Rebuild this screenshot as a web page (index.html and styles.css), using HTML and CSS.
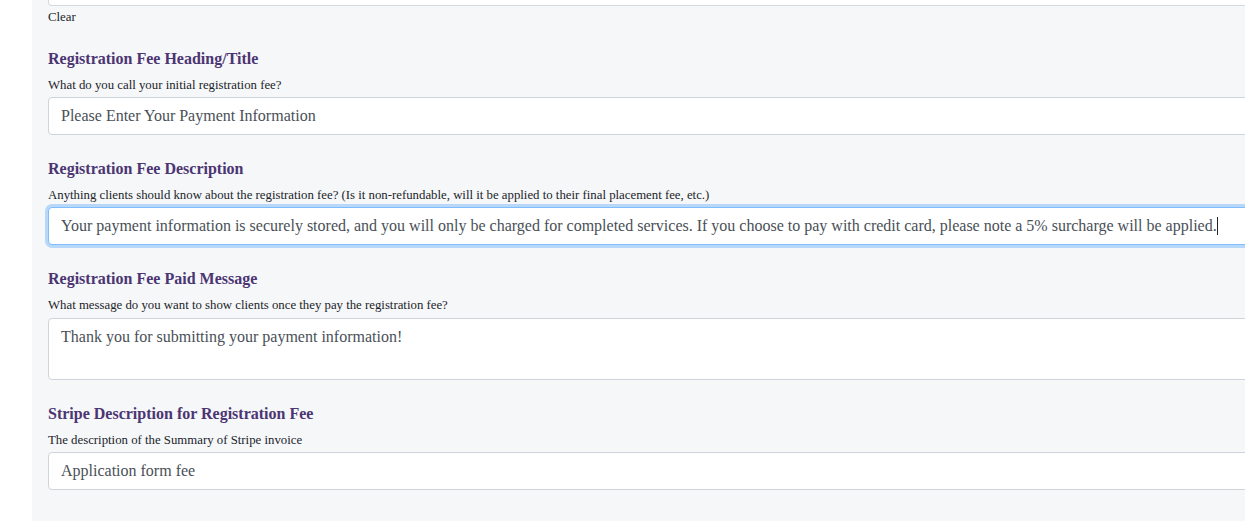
FILE: index.html
```html
<!DOCTYPE html>
<html lang="en">
<head>
    <meta charset="UTF-8">
    <meta name="viewport" content="width=device-width, initial-scale=1.0">
    <title>Registration Fee Settings</title>
    <link rel="stylesheet" href="styles.css">
</head>
<body>
    <div class="page">
        <div class="panel">
            <div class="prev-field"></div>
            <a class="clear-link">Clear</a>

            <div class="form-group">
                <h3 class="field-title">Registration Fee Heading/Title</h3>
                <p class="field-help">What do you call your initial registration fee?</p>
                <input class="form-control" type="text" value="Please Enter Your Payment Information">
            </div>

            <div class="form-group">
                <h3 class="field-title">Registration Fee Description</h3>
                <p class="field-help">Anything clients should know about the registration fee? (Is it non-refundable, will it be applied to their final placement fee, etc.)</p>
                <div class="form-control focused">Your payment information is securely stored, and you will only be charged for completed services. If you choose to pay with credit card, please note a 5% surcharge will be applied.<span class="caret"></span></div>
            </div>

            <div class="form-group">
                <h3 class="field-title">Registration Fee Paid Message</h3>
                <p class="field-help field-help-wide">What message do you want to show clients once they pay the registration fee?</p>
                <textarea class="form-control textarea">Thank you for submitting your payment information!</textarea>
            </div>

            <div class="form-group">
                <h3 class="field-title">Stripe Description for Registration Fee</h3>
                <p class="field-help">The description of the Summary of Stripe invoice</p>
                <input class="form-control" type="text" value="Application form fee">
            </div>
        </div>
    </div>
</body>
</html>
```

FILE: styles.css
```css
html, body {
    margin: 0;
    padding: 0;
    background-color: #fff;
    overflow: hidden;
}

body {
    font-family: "Liberation Serif", "Times New Roman", serif;
    color: #212529;
}

.page {
    padding-left: 32px;
    height: 521px;
}

.panel {
    background-color: #f6f7f9;
    width: 1260px;
    height: 521px;
    padding: 0 16px;
}

.prev-field {
    width: 1240px;
    height: 5px;
    background-color: #fff;
    border: 1px solid #d6d9dd;
    border-top: none;
    border-radius: 0 0 4px 4px;
}

.clear-link {
    display: block;
    font-size: 12.8px;
    line-height: 16px;
    margin-top: 3px;
    color: #212529;
}

.form-group {
    margin-top: 24px;
}

.field-title {
    font-size: 16px;
    line-height: 20px;
    font-weight: bold;
    color: #4b3572;
    margin: 0 0 8px;
}

.field-help {
    font-size: 12.8px;
    line-height: 16px;
    margin: 0 0 4px;
}

.field-help-wide {
    margin-bottom: 5px;
}

.form-control {
    display: block;
    box-sizing: border-box;
    width: 1240px;
    height: 38px;
    padding: 6px 12px;
    font-family: "Liberation Serif", "Times New Roman", serif;
    font-size: 16px;
    line-height: 24px;
    color: #495057;
    background-color: #fff;
    border: 1px solid #ced4da;
    border-radius: 4px;
    margin: 0;
    outline: none;
    white-space: nowrap;
}

.focused {
    border-color: #80bdff;
    box-shadow: 0 0 0 3px rgba(0, 123, 255, 0.25);
}

.caret {
    display: inline-block;
    width: 1px;
    height: 18px;
    background-color: #222;
    vertical-align: -4px;
}

.textarea {
    height: 62px;
    resize: none;
}
```
